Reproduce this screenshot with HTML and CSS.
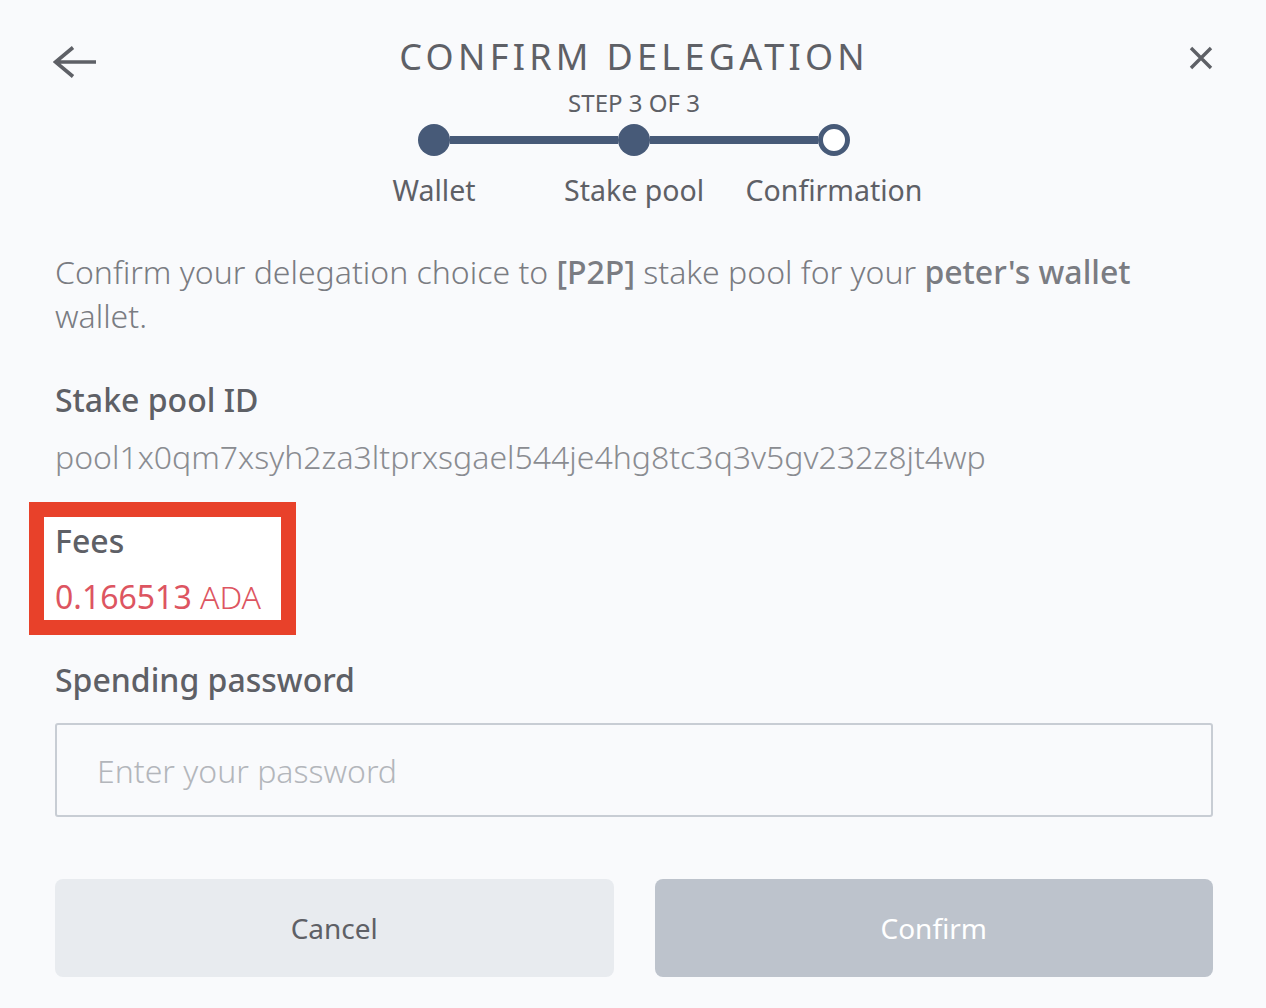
FILE: index.html
```html
<!DOCTYPE html>
<html>
<head>
<meta charset="utf-8">
<link rel="stylesheet" href="styles.css">
</head>
<body>
<div class="dialog">
  <div class="header">
    <div class="back">
      <svg width="44" height="34" viewBox="0 0 44 34"><path d="M43 17H3M20 2.5L2.5 17L20 31.5" fill="none" stroke="#5e6066" stroke-width="3.6"/></svg>
    </div>
    <div class="titles">
      <div class="title">CONFIRM DELEGATION</div>
      <div class="step">STEP 3 OF 3</div>
      <div class="stepper">
        <span class="dot"></span><span class="bar"></span><span class="dot"></span><span class="bar"></span><span class="dot open"></span>
      </div>
      <div class="labels">
        <span>Wallet</span><span>Stake pool</span><span>Confirmation</span>
      </div>
    </div>
    <div class="close">
      <svg width="24" height="24" viewBox="0 0 24 24"><path d="M2 2L22 22M22 2L2 22" fill="none" stroke="#5e6066" stroke-width="3.4"/></svg>
    </div>
  </div>

  <p class="desc">Confirm your delegation choice to <b>[P2P]</b> stake pool for your <b>peter's wallet</b> wallet.</p>

  <div class="label">Stake pool ID</div>
  <div class="poolid">pool1x0qm7xsyh2za3ltprxsgael544je4hg8tc3q3v5gv232z8jt4wp</div>

  <div class="fees">
    <div class="label">Fees</div>
    <div class="amount">0.166513<span class="unit"> ADA</span></div>
  </div>

  <div class="label pw-label">Spending password</div>
  <div class="input"><span class="placeholder">Enter your password</span></div>

  <div class="buttons">
    <div class="btn cancel">Cancel</div>
    <div class="btn confirm">Confirm</div>
  </div>
</div>
</body>
</html>
```
FILE: styles.css
```css
html, body {
  margin: 0;
  background: #f9fafc;
}
body {
  font-family: "Noto Sans", "Open Sans", sans-serif;
  color: #5e6066;
}
.dialog {
  padding: 0 53px 0 55px;
}
.header {
  display: grid;
  grid-template-columns: 1fr auto 1fr;
  padding-top: 32px;
}
.back {
  padding-top: 13px;
  margin-left: -2px;
  line-height: 0;
}
.close {
  justify-self: end;
  padding-top: 14px;
  line-height: 0;
}
.titles {
  display: flex;
  flex-direction: column;
  align-items: center;
}
.title {
  font-size: 36px;
  line-height: 50px;
  letter-spacing: 4.3px;
  margin-right: -4.3px;
  margin-left: -4px;
  font-weight: 400;
}
.step {
  font-size: 24px;
  line-height: 30px;
  margin-top: 6px;
}
.stepper {
  display: flex;
  align-items: center;
  margin-top: 6px;
}
.dot {
  width: 32px;
  height: 32px;
  border-radius: 50%;
  background: #475a78;
  box-sizing: border-box;
}
.dot.open {
  background: #ffffff;
  border: 5px solid #475a78;
}
.bar {
  width: 168px;
  height: 8px;
  background: #475a78;
}
.labels {
  display: grid;
  grid-template-columns: 200px 200px 200px;
  margin-top: 16px;
  font-size: 28.5px;
  line-height: 36px;
  text-align: center;
}
.desc {
  margin: 42px 0 0;
  font-size: 32px;
  line-height: 44px;
  font-weight: 300;
  color: #7a7c82;
}
.desc b {
  font-weight: 550;
}
.label {
  margin-top: 42px;
  font-size: 32px;
  line-height: 40px;
  font-weight: 500;
  color: #5e6066;
}
.poolid {
  margin-top: 15px;
  font-size: 32px;
  line-height: 44px;
  font-weight: 300;
  color: #8a8c91;
}
.fees {
  margin: 23px 0 0 -26px;
  width: fit-content;
  border: 15px solid #e8412a;
  background: #ffffff;
  padding: 4px 20px 1px 11px;
}
.fees .label {
  margin-top: 0;
}
.amount {
  margin-top: 14px;
  font-size: 32px;
  line-height: 44px;
  color: #dd5561;
}
.unit {
  font-weight: 300;
}
.label.pw-label {
  margin-top: 25px;
}
.input {
  margin-top: 23px;
  height: 94px;
  box-sizing: border-box;
  border: 2px solid #c8cdd4;
  border-radius: 3px;
  display: flex;
  align-items: center;
  padding-left: 40px;
}
.placeholder {
  font-size: 32px;
  font-weight: 300;
  color: #b3b6bb;
}
.buttons {
  margin-top: 62px;
  display: grid;
  grid-template-columns: 1fr 1fr;
  gap: 41px;
}
.btn {
  height: 98px;
  border-radius: 8px;
  display: flex;
  align-items: center;
  justify-content: center;
  font-size: 28px;
}
.cancel {
  background: #e8ebef;
  color: #5e6066;
}
.confirm {
  background: #bdc3cc;
  color: #ffffff;
}
```
